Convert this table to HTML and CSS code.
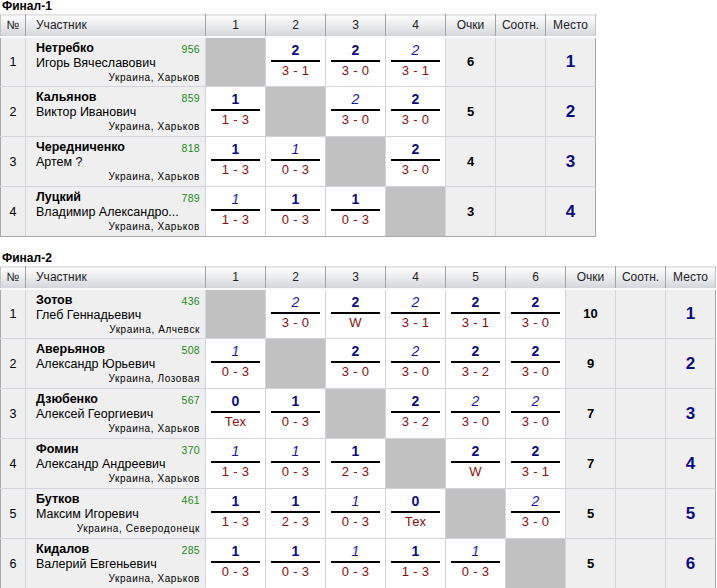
FILE: index.html
```html
<!DOCTYPE html>
<html lang="ru">
<head>
<meta charset="utf-8">
<title>Финал</title>
<link rel="stylesheet" href="styles.css">
</head>
<body>
<h3 class="title">Финал-1</h3>
<table class="grid grid-4">
<colgroup><col class="c-no"><col class="c-name"><col class="c-g"><col class="c-g"><col class="c-g"><col class="c-g"><col class="c-s"><col class="c-s"><col class="c-s"></colgroup>
<thead><tr><th>№</th><th class="h-name">Участник</th><th>1</th><th>2</th><th>3</th><th>4</th><th>Очки</th><th>Соотн.</th><th>Место</th></tr></thead>
<tbody>
<tr><td class="no">1</td><td class="pl"><div class="top"><b>Нетребко</b><span class="rt">956</span></div><div class="fn">Игорь Вячеславович</div><div class="loc">Украина, Харьков</div></td>
<td class="x"></td>
<td class="g"><div class="n">2</div><div class="s">3 - 1</div></td>
<td class="g"><div class="n">2</div><div class="s">3 - 0</div></td>
<td class="g"><div class="n i">2</div><div class="s">3 - 1</div></td>
<td class="pts">6</td><td class="rat"></td><td class="pos">1</td></tr>
<tr><td class="no">2</td><td class="pl"><div class="top"><b>Кальянов</b><span class="rt">859</span></div><div class="fn">Виктор Иванович</div><div class="loc">Украина, Харьков</div></td>
<td class="g"><div class="n">1</div><div class="s">1 - 3</div></td>
<td class="x"></td>
<td class="g"><div class="n i">2</div><div class="s">3 - 0</div></td>
<td class="g"><div class="n">2</div><div class="s">3 - 0</div></td>
<td class="pts">5</td><td class="rat"></td><td class="pos">2</td></tr>
<tr><td class="no">3</td><td class="pl"><div class="top"><b>Чередниченко</b><span class="rt">818</span></div><div class="fn">Артем ?</div><div class="loc">Украина, Харьков</div></td>
<td class="g"><div class="n">1</div><div class="s">1 - 3</div></td>
<td class="g"><div class="n i">1</div><div class="s">0 - 3</div></td>
<td class="x"></td>
<td class="g"><div class="n">2</div><div class="s">3 - 0</div></td>
<td class="pts">4</td><td class="rat"></td><td class="pos">3</td></tr>
<tr><td class="no">4</td><td class="pl"><div class="top"><b>Луцкий</b><span class="rt">789</span></div><div class="fn">Владимир Александро...</div><div class="loc">Украина, Харьков</div></td>
<td class="g"><div class="n i">1</div><div class="s">1 - 3</div></td>
<td class="g"><div class="n">1</div><div class="s">0 - 3</div></td>
<td class="g"><div class="n">1</div><div class="s">0 - 3</div></td>
<td class="x"></td>
<td class="pts">3</td><td class="rat"></td><td class="pos">4</td></tr>
</tbody>
</table>

<h3 class="title title-2">Финал-2</h3>
<table class="grid grid-6">
<colgroup><col class="c-no"><col class="c-name"><col class="c-g"><col class="c-g"><col class="c-g"><col class="c-g"><col class="c-g"><col class="c-g"><col class="c-s"><col class="c-s"><col class="c-s"></colgroup>
<thead><tr><th>№</th><th class="h-name">Участник</th><th>1</th><th>2</th><th>3</th><th>4</th><th>5</th><th>6</th><th>Очки</th><th>Соотн.</th><th>Место</th></tr></thead>
<tbody>
<tr><td class="no">1</td><td class="pl"><div class="top"><b>Зотов</b><span class="rt">436</span></div><div class="fn">Глеб Геннадьевич</div><div class="loc">Украина, Алчевск</div></td>
<td class="x"></td>
<td class="g"><div class="n i">2</div><div class="s">3 - 0</div></td>
<td class="g"><div class="n">2</div><div class="s">W</div></td>
<td class="g"><div class="n i">2</div><div class="s">3 - 1</div></td>
<td class="g"><div class="n">2</div><div class="s">3 - 1</div></td>
<td class="g"><div class="n">2</div><div class="s">3 - 0</div></td>
<td class="pts">10</td><td class="rat"></td><td class="pos">1</td></tr>
<tr><td class="no">2</td><td class="pl"><div class="top"><b>Аверьянов</b><span class="rt">508</span></div><div class="fn">Александр Юрьевич</div><div class="loc">Украина, Лозовая</div></td>
<td class="g"><div class="n i">1</div><div class="s">0 - 3</div></td>
<td class="x"></td>
<td class="g"><div class="n">2</div><div class="s">3 - 0</div></td>
<td class="g"><div class="n i">2</div><div class="s">3 - 0</div></td>
<td class="g"><div class="n">2</div><div class="s">3 - 2</div></td>
<td class="g"><div class="n">2</div><div class="s">3 - 0</div></td>
<td class="pts">9</td><td class="rat"></td><td class="pos">2</td></tr>
<tr><td class="no">3</td><td class="pl"><div class="top"><b>Дзюбенко</b><span class="rt">567</span></div><div class="fn">Алексей Георгиевич</div><div class="loc">Украина, Харьков</div></td>
<td class="g"><div class="n">0</div><div class="s">Тех</div></td>
<td class="g"><div class="n">1</div><div class="s">0 - 3</div></td>
<td class="x"></td>
<td class="g"><div class="n">2</div><div class="s">3 - 2</div></td>
<td class="g"><div class="n i">2</div><div class="s">3 - 0</div></td>
<td class="g"><div class="n i">2</div><div class="s">3 - 0</div></td>
<td class="pts">7</td><td class="rat"></td><td class="pos">3</td></tr>
<tr><td class="no">4</td><td class="pl"><div class="top"><b>Фомин</b><span class="rt">370</span></div><div class="fn">Александр Андреевич</div><div class="loc">Украина, Харьков</div></td>
<td class="g"><div class="n i">1</div><div class="s">1 - 3</div></td>
<td class="g"><div class="n i">1</div><div class="s">0 - 3</div></td>
<td class="g"><div class="n">1</div><div class="s">2 - 3</div></td>
<td class="x"></td>
<td class="g"><div class="n">2</div><div class="s">W</div></td>
<td class="g"><div class="n">2</div><div class="s">3 - 1</div></td>
<td class="pts">7</td><td class="rat"></td><td class="pos">4</td></tr>
<tr><td class="no">5</td><td class="pl"><div class="top"><b>Бутков</b><span class="rt">461</span></div><div class="fn">Максим Игоревич</div><div class="loc">Украина, Северодонецк</div></td>
<td class="g"><div class="n">1</div><div class="s">1 - 3</div></td>
<td class="g"><div class="n">1</div><div class="s">2 - 3</div></td>
<td class="g"><div class="n i">1</div><div class="s">0 - 3</div></td>
<td class="g"><div class="n">0</div><div class="s">Тех</div></td>
<td class="x"></td>
<td class="g"><div class="n i">2</div><div class="s">3 - 0</div></td>
<td class="pts">5</td><td class="rat"></td><td class="pos">5</td></tr>
<tr><td class="no">6</td><td class="pl"><div class="top"><b>Кидалов</b><span class="rt">285</span></div><div class="fn">Валерий Евгеньевич</div><div class="loc">Украина, Харьков</div></td>
<td class="g"><div class="n">1</div><div class="s">0 - 3</div></td>
<td class="g"><div class="n">1</div><div class="s">0 - 3</div></td>
<td class="g"><div class="n i">1</div><div class="s">0 - 3</div></td>
<td class="g"><div class="n">1</div><div class="s">1 - 3</div></td>
<td class="g"><div class="n i">1</div><div class="s">0 - 3</div></td>
<td class="x"></td>
<td class="pts">5</td><td class="rat"></td><td class="pos">6</td></tr>
</tbody>
</table>
</body>
</html>
```

FILE: styles.css
```css
html, body {
  margin: 0;
  padding: 0;
  background: #ffffff;
}
body {
  font-family: "Liberation Sans", Arial, sans-serif;
  font-size: 12px;
  color: #000;
}
.title {
  margin: 0;
  padding: 0 0 0 2px;
  height: 14px;
  font-size: 12px;
  line-height: 12px;
  font-weight: bold;
}
.title-2 {
  margin-top: 15px;
}
.grid {
  border-collapse: collapse;
  table-layout: fixed;
}
.grid-4 { width: 595px; }
.grid-6 { width: 715px; }
.c-no { width: 25px; }
.c-name { width: 180px; }
.c-g { width: 60px; }
.c-s { width: 50px; }

.grid thead tr { height: 22px; }
.grid tbody tr { height: 50px; }

.grid th {
  padding: 0;
  font-weight: normal;
  font-size: 12px;
  color: #222;
  text-align: center;
  background: linear-gradient(#fdfdfd, #e7e8eb 55%, #d4d5da);
  border-right: 1px solid #a3a3a3;
  border-bottom: 1px solid #b2b2b2;
  border-top: 1px solid #e2e2e2;
}
.grid th:first-child { border-left: 1px solid #c4c4c4; }
.grid th:last-child { border-right: 1px solid #c4c4c4; }
.grid th.h-name {
  text-align: left;
  padding-left: 10px;
}
.grid td {
  padding: 0;
  background: #efefef;
  border: 1px solid #d4d4dc;
  vertical-align: middle;
}
.grid tbody tr:first-child td { border-top: 2px solid #fafafa; }
.grid td:first-child { border-left-color: #a9a9a9; }
.grid td:last-child { border-right-color: #a9a9a9; }
.grid tbody tr:last-child td { border-bottom-color: #a9a9a9; }

.no {
  text-align: center;
  font-size: 12.5px;
}
.grid td.pl {
  vertical-align: top;
  padding: 3px 5px 0 10px;
}
.top {
  display: flex;
  justify-content: space-between;
  align-items: flex-end;
  line-height: 14px;
}
.top b { font-size: 12.5px; }
.rt {
  color: #1c8a1c;
  font-size: 10.5px;
  line-height: 11px;
  letter-spacing: 0.3px;
}
.fn {
  margin-top: 1px;
  line-height: 15px;
  font-size: 12.5px;
  white-space: nowrap;
}
.loc {
  margin-top: 1px;
  font-size: 10px;
  line-height: 12px;
  letter-spacing: 0.6px;
  text-align: right;
  white-space: nowrap;
}
.grid td.x { background: #c1c1c1; }
.grid td.g {
  background: #fff;
  vertical-align: top;
  padding: 4px 5px 0 5px;
  text-align: center;
}
.n {
  font-weight: bold;
  font-size: 14px;
  line-height: 17px;
  color: #0c0c80;
  border-bottom: 2px solid #000;
  padding-bottom: 1px;
}
.n.i {
  font-weight: normal;
  font-style: italic;
  color: #1818a8;
}
.s {
  font-size: 13px;
  line-height: 16px;
  color: #8a0e0e;
  padding-top: 1px;
  letter-spacing: 0.3px;
}
.pts {
  text-align: center;
  font-weight: bold;
  font-size: 13px;
}
.pos {
  text-align: center;
  font-weight: bold;
  font-size: 17px;
  color: #0c0c80;
}
```
